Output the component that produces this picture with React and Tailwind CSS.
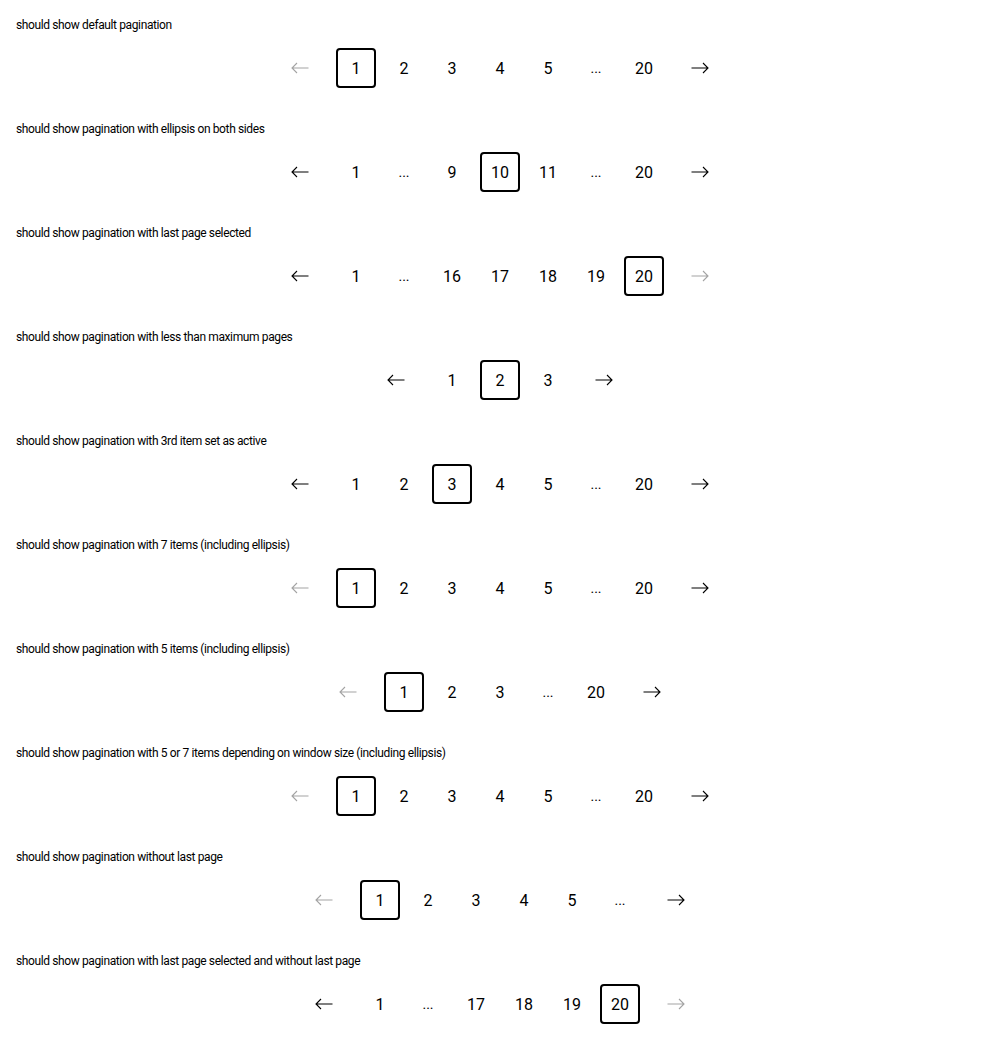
import React from 'react';

const Arrow = ({ dir, disabled }) => (
  <span className={`flex h-10 w-10 items-center justify-center ${disabled ? 'text-[#a3a3a3]' : 'text-black'}`}>
    <svg width="18" height="12" viewBox="0 0 18 12" fill="none" stroke="currentColor" strokeWidth="1.1" className={dir === 'right' ? 'rotate-180' : ''}>
      <path d="M17.5 6H1 M6 1L1 6L6 11" />
    </svg>
  </span>
);

const Pagination = ({ items, active, prevDisabled, nextDisabled }) => (
  <div className="mt-4 flex items-center justify-center">
    <Arrow dir="left" disabled={prevDisabled} />
    <div className="mx-4 flex gap-2">
      {items.map((it, i) =>
        it === '...' ? (
          <span key={i} className="flex h-10 w-10 items-center justify-center pt-px text-[14px] text-black">...</span>
        ) : (
          <span
            key={i}
            className={`flex h-10 w-10 items-center justify-center rounded pt-px text-base text-black ${it === active ? 'border-2 border-black' : ''}`}
          >
            {it}
          </span>
        )
      )}
    </div>
    <Arrow dir="right" disabled={nextDisabled} />
  </div>
);

const cases = [
  { title: 'should show default pagination', items: [1, 2, 3, 4, 5, '...', 20], active: 1, prev: true },
  { title: 'should show pagination with ellipsis on both sides', items: [1, '...', 9, 10, 11, '...', 20], active: 10 },
  { title: 'should show pagination with last page selected', items: [1, '...', 16, 17, 18, 19, 20], active: 20, next: true },
  { title: 'should show pagination with less than maximum pages', items: [1, 2, 3], active: 2 },
  { title: 'should show pagination with 3rd item set as active', items: [1, 2, 3, 4, 5, '...', 20], active: 3 },
  { title: 'should show pagination with 7 items (including ellipsis)', items: [1, 2, 3, 4, 5, '...', 20], active: 1, prev: true },
  { title: 'should show pagination with 5 items (including ellipsis)', items: [1, 2, 3, '...', 20], active: 1, prev: true },
  { title: 'should show pagination with 5 or 7 items depending on window size (including ellipsis)', items: [1, 2, 3, 4, 5, '...', 20], active: 1, prev: true },
  { title: 'should show pagination without last page', items: [1, 2, 3, 4, 5, '...'], active: 1, prev: true },
  { title: 'should show pagination with last page selected and without last page', items: [1, '...', 17, 18, 19, 20], active: 20, next: true },
];

export default function App() {
  return (
    <div className="bg-white font-['Roboto',sans-serif] text-black">
      {cases.map((c, i) => (
        <section key={i} className="px-4 pt-4 pb-4">
          <h2 className="h-4 pt-px text-[12px] leading-4 tracking-[-0.38px]">{c.title}</h2>
          <Pagination items={c.items} active={c.active} prevDisabled={c.prev} nextDisabled={c.next} />
        </section>
      ))}
    </div>
  );
}
